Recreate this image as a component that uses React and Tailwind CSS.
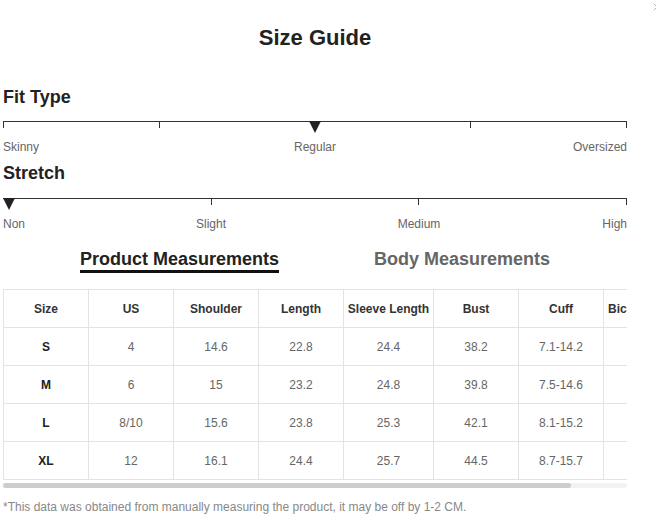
import { X } from 'lucide-react';

const headers = ['Size', 'US', 'Shoulder', 'Length', 'Sleeve Length', 'Bust', 'Cuff', 'Bicep Length'];
const widths = ['w-[85px]', 'w-[85px]', 'w-[85px]', 'w-[85px]', 'w-[90px]', 'w-[85px]', 'w-[85px]', 'w-[85px]'];

const rows = [
  ['S', '4', '14.6', '22.8', '24.4', '38.2', '7.1-14.2', ''],
  ['M', '6', '15', '23.2', '24.8', '39.8', '7.5-14.6', ''],
  ['L', '8/10', '15.6', '23.8', '25.3', '42.1', '8.1-15.2', ''],
  ['XL', '12', '16.1', '24.4', '25.7', '44.5', '8.7-15.7', ''],
];

function Scale({ ticks, marker }) {
  return (
    <div className="relative h-[18px] border-t border-[#333]">
      {ticks.map((t) => (
        <span
          key={t}
          className="absolute top-0 h-[6px] w-px bg-[#333]"
          style={{ left: `calc(${t}% - ${t / 100}px)` }}
        />
      ))}
      <span
        className={`absolute -top-px h-0 w-0 border-l-[6px] border-r-[6px] border-t-[12px] border-l-transparent border-r-transparent border-t-[#222] ${
          marker === 0 ? 'left-0' : 'left-1/2 -translate-x-1/2'
        }`}
      />
    </div>
  );
}

export default function App() {
  return (
    <div className="relative w-[656px] h-[514px] overflow-hidden bg-white font-['Liberation_Sans',Arial,sans-serif]">
      <X className="absolute top-[1px] right-[-7px] w-[12px] h-[12px] text-[#999]" strokeWidth={1.5} />

      <div className="ml-[3px] w-[624px]">
        <h1 className="pt-[24px] text-center text-[22px] leading-[28px] font-bold text-[#222]">Size Guide</h1>

        <h2 className="mt-[33px] text-[18px] leading-[24px] font-bold text-[#222]">Fit Type</h2>
        <div className="mt-[12px]">
          <Scale ticks={[0, 25, 75, 100]} marker={50} />
          <div className="grid grid-cols-4 text-[12px] leading-[16px] text-[#666]">
            <span className="text-left">Skinny</span>
            <span className="col-span-2 text-center">Regular</span>
            <span className="text-right">Oversized</span>
          </div>
        </div>

        <h2 className="mt-[6px] text-[18px] leading-[24px] font-bold text-[#222]">Stretch</h2>
        <div className="mt-[13px]">
          <Scale ticks={[33.33, 66.67, 100]} marker={0} />
          <div className="grid grid-cols-6 text-[12px] leading-[16px] text-[#666]">
            <span className="text-left">Non</span>
            <span className="col-span-2 text-center">Slight</span>
            <span className="col-span-2 text-center">Medium</span>
            <span className="text-right">High</span>
          </div>
        </div>

        <div className="mt-[18px] flex justify-center gap-[95px] text-[18px] leading-[18px] font-bold">
          <span className="pb-[2px] border-b-[3px] border-[#111] text-[#222]">Product Measurements</span>
          <span className="text-[#666]">Body Measurements</span>
        </div>

        <div className="mt-[16px] w-[624px] overflow-hidden">
          <table className="w-[685px] table-fixed border-collapse text-[12px] text-center">
            <thead>
              <tr>
                {headers.map((h, i) => (
                  <th key={h} className={`${widths[i]} h-[38px] border border-[#e3e3e3] font-semibold text-[#333] whitespace-nowrap`}>
                    {h}
                  </th>
                ))}
              </tr>
            </thead>
            <tbody>
              {rows.map((r) => (
                <tr key={r[0]}>
                  {r.map((c, i) => (
                    <td
                      key={i}
                      className={`h-[38px] border border-[#e3e3e3] ${i === 0 ? 'font-bold text-[#222]' : 'text-[#666]'}`}
                    >
                      {c}
                    </td>
                  ))}
                </tr>
              ))}
            </tbody>
          </table>
        </div>

        <div className="mt-[3px] h-[5px] w-[624px] rounded-full bg-[#f2f2f2]">
          <div className="h-[5px] w-[568px] rounded-full bg-[#cdcdcd]" />
        </div>

        <p className="mt-[12px] text-[12px] leading-[14px] text-[#888]">
          *This data was obtained from manually measuring the product, it may be off by 1-2 CM.
        </p>
      </div>
    </div>
  );
}
